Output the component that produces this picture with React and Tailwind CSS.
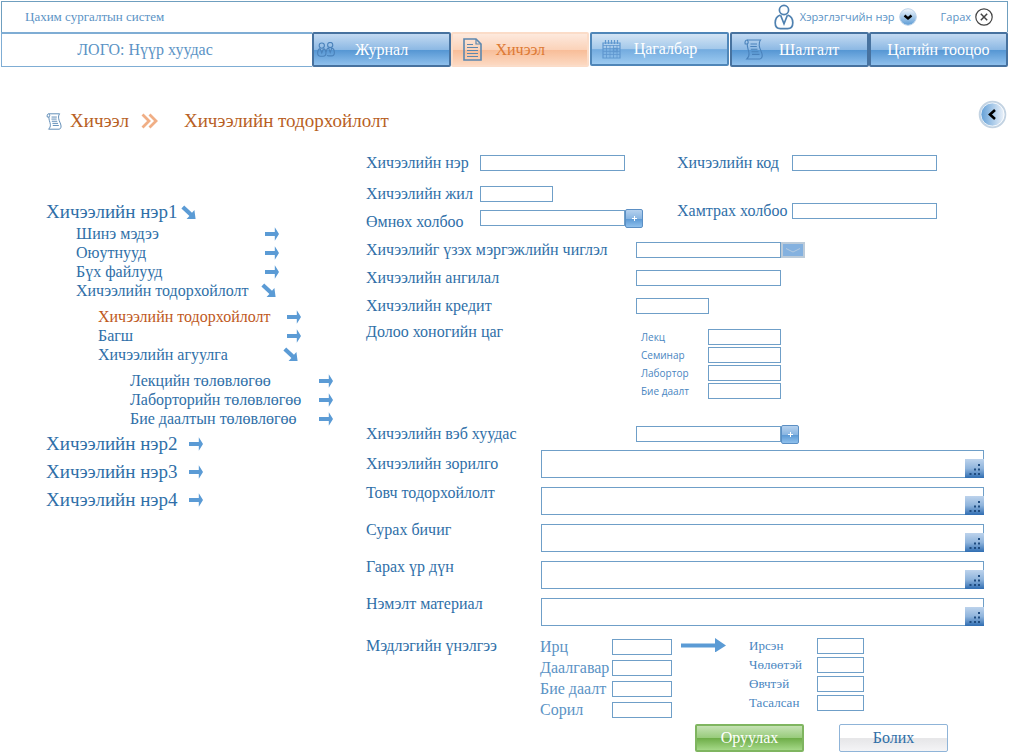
import React from "react";

const SERIF = "font-['Liberation_Serif','Times_New_Roman',serif]";
const SANS = "font-['Open_Sans','Noto_Sans',sans-serif]";
const BOX = "h-4 border border-[#6f9fc8] bg-white px-1 text-xs text-[#2f6fa8] outline-none";

function UserIcon({ className }) {
  return (
    <svg viewBox="0 0 20 26" className={className} fill="none" stroke="#4f81b0" strokeWidth="1.7">
      <circle cx="10" cy="6" r="4.600" />
      <path d="M6.500 11C3.200 12 1.200 15 1.200 18.800c0 3.700 2 5.900 5.200 5.900h7.200c3.200 0 5.200-2.200 5.200-5.900 0-3.800-2-6.800-5.300-7.800" />
      <path d="M6.600 11.200L10 19.800l3.400-8.600" />
    </svg>
  );
}

function UsersIcon({ className }) {
  return (
    <svg viewBox="0 0 18 15" className={className} fill="none" stroke="#4a82bb" strokeWidth="1.1">
      <circle cx="4.800" cy="3.600" r="2.600" />
      <path d="M3 6.400C1.500 7 .6 8.800.6 10.800c0 2.200 1.200 3.500 3 3.500h2.400c1.800 0 3-1.300 3-3.500 0-2-.9-3.800-2.400-4.400M3.200 6.600l1.600 4.400 1.600-4.400" />
      <circle cx="13.200" cy="3" r="2.600" />
      <path d="M11.400 5.800c-1.300.8-2 2.400-2.200 4M10 13.400c.5.300 1.200.5 2 .5h2.400c1.800 0 3-1.300 3-3.500 0-2-.9-3.800-2.400-4.400M11.600 6l1.600 4.400L14.800 6" />
    </svg>
  );
}

function PageIcon({ className }) {
  return (
    <svg viewBox="0 0 19 23" className={className} fill="none" stroke="#5c87ae">
      <path d="M1 1h12l5 5v16H1z" strokeWidth="1.600" />
      <path d="M13 1v5h5" strokeWidth="1.200" />
      <path d="M4 6.500h6M4 9.500h11M4 12.500h11M4 15.500h11M4 18.500h11" strokeWidth="1.100" />
    </svg>
  );
}

function CalendarIcon({ className }) {
  return (
    <svg viewBox="0 0 19 19" className={className} fill="none" stroke="#5f97cf">
      <path d="M1 3h17v15H1z" strokeWidth="1.200" />
      <path d="M1 5.500h17M1 8.500h17M1 11.500h17M1 14.500h17M4.500 5v13M8 5v13M11.500 5v13M15 5v13" strokeWidth=".8" />
      <path d="M3.500 0v4M6.500 0v4M9.500 0v4M12.500 0v4M15.500 0v4" strokeWidth="1.200" />
      <path d="M11.500 8.500H15v3h-3.500z" strokeWidth="1.400" />
    </svg>
  );
}

function ScrollIcon({ className }) {
  return (
    <svg viewBox="0 0 19 21" className={className} fill="none" stroke="currentColor" strokeWidth="1.100">
      <path d="M3 1h13.500c-1.400 1.600-1.500 3.500-1.300 5.500.4 3.800 2.700 6 3 9.500.1 2.200-.8 4-2.500 4H2.800c1.700-1.600 2.500-3.600 2.200-6C4.500 10.500 2.900 8.300 3.300 5H1.200C.6 3 1.400 1 3 1z" />
      <path d="M3.300 5C4.600 4 4.500 2 3 1M6.500 5h6.500M6.300 7.500h6.500M6.800 10.200h6.700M7.500 12.800h7M8 15.400h7.500" />
    </svg>
  );
}

function TreeArrow({ open }) {
  return open ? (
    <svg viewBox="0 0 15 15" className="mr-1 h-[15px] w-[15px] shrink-0" fill="#5b9bd5">
      <path d="M3.200.4L11 7.800l2.400-2.700 1.200 9-9-.2 2.800-2.800L.4 3.600z" />
    </svg>
  ) : (
    <svg viewBox="0 0 14 14" className="mr-px h-3.5 w-3.5 shrink-0" fill="#5b9bd5">
      <path d="M0 5h9.800V.3L14 7l-4.200 6.700V9H0z" />
    </svg>
  );
}

const TABS = [
  { label: "Журнал", icon: <UsersIcon className="absolute left-[3px] h-[15px] w-[18px]" />, look: "blue" },
  { label: "Хичээл", icon: <PageIcon className="absolute left-2.5 h-[23px] w-[19px]" />, look: "orange" },
  { label: "Цагалбар", icon: <CalendarIcon className="absolute left-2.5 h-[19px] w-[19px]" />, look: "light", pad: "pl-3" },
  { label: "Шалгалт", icon: <ScrollIcon className="absolute left-3 h-[21px] w-[19px] text-[#4a82bb]" />, look: "blue", pad: "pl-5" },
  { label: "Цагийн тооцоо", icon: null, look: "blue" },
];

const TAB_LOOKS = {
  blue: "border-2 border-[#47729f] bg-[linear-gradient(#c3daf2,#8db9e4_50%,#5596d3_52%,#8fc0ec)] text-white",
  light: "border-2 border-[#4f86b8] bg-[linear-gradient(#d3e4f4,#a3c8ea_50%,#73abdf_52%,#9ccaf0)] text-white mb-px mr-px",
  orange: "border-2 border-[#fbdcc8] bg-[linear-gradient(#fde9dd,#fbd3ba_50%,#f8bd98_52%,#fcd9c2)] text-[#dd7a35] mr-px",
};

const TREE = [
  {
    label: "Хичээлийн нэр1",
    children: [
      { label: "Шинэ мэдээ" },
      { label: "Оюутнууд" },
      { label: "Бүх файлууд" },
      {
        label: "Хичээлийн тодорхойлолт",
        children: [
          { label: "Хичээлийн тодорхойлолт", current: true },
          { label: "Багш" },
          {
            label: "Хичээлийн агуулга",
            children: [
              { label: "Лекцийн төлөвлөгөө" },
              { label: "Лаборторийн төлөвлөгөө" },
              { label: "Бие даалтын төлөвлөгөө" },
            ],
          },
        ],
      },
    ],
  },
  { label: "Хичээлийн нэр2" },
  { label: "Хичээлийн нэр3" },
  { label: "Хичээлийн нэр4" },
];

const NESTING = ["", "pl-[30px]", "mt-[7px] pl-[22px]", "mt-[7px] pl-8"];

function TreeItem({ node, level }) {
  const open = Boolean(node.children);
  const row =
    level === 0
      ? `h-6 text-[19px] ${open ? "gap-1" : "gap-3"}`
      : "h-[19px] w-[204px] justify-between text-base";
  return (
    <li>
      <a
        href="#"
        aria-current={node.current ? "page" : undefined}
        className={`flex items-center whitespace-nowrap ${row} ${node.current ? "text-[#c0591c]" : ""}`}
      >
        {node.label}
        <TreeArrow open={open} />
      </a>
      {open && (
        <ul className={NESTING[level + 1]}>
          {node.children.map((child) => (
            <TreeItem key={child.label} node={child} level={level + 1} />
          ))}
        </ul>
      )}
    </li>
  );
}

function PlusButton({ label }) {
  return (
    <button
      type="button"
      aria-label={label}
      className="flex h-[19px] w-[18px] items-center justify-center rounded-xs border border-[#5b8fc4] bg-[linear-gradient(#b5d1ee,#8ab6e2_50%,#5a98d4_52%,#8fc0ec)] text-white"
    >
      <svg viewBox="0 0 7 7" className="h-[7px] w-[7px]" stroke="currentColor">
        <path d="M3.500 1v5M1 3.500h5" />
      </svg>
    </button>
  );
}

function WideField({ id, label, center }) {
  return (
    <div className="flex h-7">
      <label htmlFor={id} className={`w-[175px] shrink-0 leading-3 ${center ? "self-center" : ""}`}>
        {label}
      </label>
      <div className="relative flex min-w-0 flex-1">
        <textarea
          id={id}
          className="h-7 w-full resize-none border border-[#6f9fc8] bg-white px-1 text-sm outline-none"
        />
        <svg viewBox="0 0 19 19" className="absolute right-0 bottom-0 h-[19px] w-[19px]" aria-hidden="true">
          <defs>
            <linearGradient id={`${id}-grip`} x1="0" y1="0" x2="0" y2="1">
              <stop offset="0" stopColor="#bdd3ec" />
              <stop offset=".5" stopColor="#8fb4dc" />
              <stop offset="1" stopColor="#2f6db2" />
            </linearGradient>
          </defs>
          <path d="M0 0h19v19H0z" fill={`url(#${id}-grip)`} />
          <path
            d="M13 5h2v2h-2zM9 9.500h2v2H9zM13 9.500h2v2h-2zM4.500 14h2v2h-2zM9 14h2v2H9zM13 14h2v2h-2z"
            fill="#1f4c80"
          />
        </svg>
      </div>
    </div>
  );
}

const HOURS = ["Лекц", "Семинар", "Лабортор", "Бие даалт"];
const WIDE = ["Хичээлийн зорилго", "Товч тодорхойлолт", "Сурах бичиг", "Гарах үр дүн", "Нэмэлт материал"];
const GRADES = ["Ирц", "Даалгавар", "Бие даалт", "Сорил"];
const ATTENDANCE = ["Ирсэн", "Чөлөөтэй", "Өвчтэй", "Тасалсан"];

export default function App() {
  return (
    <div className={`bg-white ${SERIF} text-[#2f6fa8]`}>
      <header className="px-px pt-px text-[#5b93c5]">
        <div className="flex h-[31px] items-center justify-between border border-b-0 border-[#6f9fbf] pr-3.5 pl-[23px]">
          <span className="text-[13px]">Цахим сургалтын систем</span>
          <div className={`flex items-center text-[11px] ${SANS}`}>
            <UserIcon className="h-[26px] w-5" />
            <button type="button" className="ml-1.5 flex items-center gap-1">
              Хэрэглэгчийн нэр
              <svg viewBox="0 0 18 18" className="h-[18px] w-[18px]">
                <defs>
                  <linearGradient id="menu-dot" x1="0" y1="0" x2="0" y2="1">
                    <stop offset="0" stopColor="#f4f8fd" />
                    <stop offset="1" stopColor="#5b9bd5" />
                  </linearGradient>
                </defs>
                <circle cx="9" cy="9" r="8.300" fill="url(#menu-dot)" stroke="#bcd3ea" />
                <path d="M5.500 7.500L9 10.500l3.500-3" fill="none" stroke="#000" strokeWidth="2.400" />
              </svg>
            </button>
            <button type="button" className="ml-6 flex items-center gap-1">
              Гарах
              <svg viewBox="0 0 18 18" className="h-[18px] w-[18px]" fill="none" stroke="#444">
                <circle cx="9" cy="9" r="8.200" strokeWidth="1.200" />
                <path d="M5.800 5.800l6.400 6.400M12.200 5.800l-6.400 6.400" strokeWidth="1.500" />
              </svg>
            </button>
          </div>
        </div>
        <nav className="grid h-[35px] grid-cols-[311px_repeat(5,minmax(0,1fr))]">
          <a
            href="#"
            className="flex items-center justify-center border border-t-2 border-r-0 border-[#7fadd4] pr-6 text-base"
          >
            ЛОГО: Нүүр хуудас
          </a>
          {TABS.map((tab) => (
            <a
              key={tab.label}
              href="#"
              className={`relative flex items-center justify-center rounded-xs text-base whitespace-nowrap ${TAB_LOOKS[tab.look]} ${tab.pad ?? ""}`}
            >
              {tab.icon}
              {tab.label}
            </a>
          ))}
        </nav>
      </header>

      <div className="mt-[33px] flex h-[33px] justify-between pr-0.5 pl-[46px]">
        <h1 className="flex items-center gap-3 self-end text-[19px] leading-6 text-[#b85f24]">
          <span className="flex items-center gap-2">
            <ScrollIcon className="h-[17px] w-4 text-[#4f81b0]" />
            Хичээл
          </span>
          <svg viewBox="0 0 17 16" className="mr-3.5 h-4 w-[17px]" fill="none" stroke="#f0ae85" strokeWidth="2.800">
            <path d="M1.500 1.500L8 8l-6.500 6.500M8.500 1.500L15 8l-6.500 6.500" />
          </svg>
          <span>Хичээлийн тодорхойлолт</span>
        </h1>
        <button type="button" aria-label="Буцах" className="h-[29px] w-[29px]">
          <svg viewBox="0 0 29 29" className="h-[29px] w-[29px]">
            <defs>
              <linearGradient id="back-dot">
                <stop offset="0" stopColor="#5b9bd5" />
                <stop offset="1" stopColor="#f4f7fc" />
              </linearGradient>
            </defs>
            <circle cx="14.500" cy="14.500" r="12.800" fill="url(#back-dot)" stroke="#c3d3e2" strokeWidth="2" />
            <circle cx="14.500" cy="14.500" r="11.600" fill="none" stroke="#fff" strokeWidth=".8" />
            <path d="M17 10l-5 4.500 5 4.500" fill="none" stroke="#000" strokeWidth="2.600" />
          </svg>
        </button>
      </div>

      <main className="flex">
        <aside className="w-[366px] shrink-0 pt-[67px] pl-[46px]">
          <ul className="flex flex-col gap-1">
            {TREE.map((node) => (
              <TreeItem key={node.label} node={node} level={0} />
            ))}
          </ul>
        </aside>

        <form className="min-w-0 flex-1 pt-[18px] pr-[25px] text-base">
          <div className="flex">
            <div className="w-[311px]">
              <div className="flex h-6 items-center">
                <label htmlFor="name" className="w-[114px]">Хичээлийн нэр</label>
                <input id="name" className={`${BOX} w-[145px]`} />
              </div>
              <div className="mt-[7px] flex h-6 items-center">
                <label htmlFor="year" className="w-[114px]">Хичээлийн жил</label>
                <input id="year" className={`${BOX} w-[73px]`} />
              </div>
              <div className="flex h-[30px] items-start">
                <label htmlFor="prev" className="w-[114px] pt-1">Өмнөх холбоо</label>
                <div className="flex h-6 items-center">
                  <input id="prev" className={`${BOX} w-[145px]`} />
                  <PlusButton label="Өмнөх холбоо нэмэх" />
                </div>
              </div>
            </div>
            <div className="flex flex-col gap-6">
              <div className="flex h-6 items-center">
                <label htmlFor="code" className="w-[115px]">Хичээлийн код</label>
                <input id="code" className={`${BOX} w-[145px]`} />
              </div>
              <div className="flex h-6 items-center">
                <label htmlFor="joint" className="w-[115px] whitespace-nowrap">Хамтрах холбоо</label>
                <input id="joint" className={`${BOX} w-[145px]`} />
              </div>
            </div>
          </div>

          <div className="flex h-7 items-center">
            <label htmlFor="major" className="w-[270px]">Хичээлийг үзэх мэргэжлийн чиглэл</label>
            <input id="major" className={`${BOX} w-[145px]`} />
            <button
              type="button"
              aria-label="Чиглэл сонгох"
              className="flex h-4 w-6 items-center justify-center border-2 border-[#bccbd9] bg-[#84b1df]"
            >
              <svg viewBox="0 0 14 5" className="h-[5px] w-3.5" fill="none" stroke="#b3c9df">
                <path d="M0 .5l3 1.500 4 2 4-2 3-1.500" />
              </svg>
            </button>
          </div>
          <div className="flex h-7 items-center">
            <label htmlFor="category" className="w-[270px]">Хичээлийн ангилал</label>
            <input id="category" className={`${BOX} w-[145px]`} />
          </div>
          <div className="flex h-7 items-center">
            <label htmlFor="credit" className="w-[270px]">Хичээлийн кредит</label>
            <input id="credit" className={`${BOX} w-[73px]`} />
          </div>
          <fieldset className="flex">
            <legend className="float-left w-[275px]">Долоо хоногийн цаг</legend>
            <div className={`pt-2 text-[10px] text-[#4a86bf] ${SANS}`}>
              {HOURS.map((label, i) => (
                <div key={label} className="flex h-[18px] items-center">
                  <label htmlFor={`hours-${i}`} className="w-[67px]">{label}</label>
                  <input id={`hours-${i}`} className={`${BOX} w-[73px]`} />
                </div>
              ))}
            </div>
          </fieldset>
          <div className="mt-5 flex h-7 items-center">
            <label htmlFor="web" className="w-[270px]">Хичээлийн вэб хуудас</label>
            <input id="web" className={`${BOX} w-[145px]`} />
            <PlusButton label="Вэб хуудас нэмэх" />
          </div>

          <div className="mt-0.5 flex flex-col gap-[9px]">
            {WIDE.map((label, i) => (
              <WideField key={label} id={`wide-${i}`} label={label} center={i === 0} />
            ))}
          </div>

          <div className="mt-2.5 flex items-start">
            <span className="w-[174px] leading-5">Мэдлэгийн үнэлгээ</span>
            <div className="text-[#5b93c5]">
              {GRADES.map((label, i) => (
                <div key={label} className="flex h-[21px] items-center">
                  <label htmlFor={`grade-${i}`} className="w-[72px] whitespace-nowrap">{label}</label>
                  <input id={`grade-${i}`} className={`${BOX} w-[60px]`} />
                </div>
              ))}
            </div>
            <svg viewBox="0 0 45 16" className="mr-[23px] ml-[9px] h-4 w-[45px] self-start" fill="#5b9bd5">
              <path d="M0 7.500h34V2l11 7.500L34 16.500v-5H0z" />
            </svg>
            <div className="text-[13px] text-[#4a86bf]">
              {ATTENDANCE.map((label, i) => (
                <div key={label} className="flex h-[19px] items-center">
                  <label htmlFor={`att-${i}`} className="w-[68px]">{label}</label>
                  <input id={`att-${i}`} className={`${BOX} w-[47px]`} />
                </div>
              ))}
            </div>
          </div>

          <div className="mt-1 flex justify-end gap-[35px] pr-9">
            <button
              type="submit"
              className="h-7 w-[109px] rounded-xs border-2 border-[#7fb560] bg-[linear-gradient(#c5e2b4,#98cb7b_50%,#6fae49_52%,#a5d888)] text-base leading-6 text-white"
            >
              Оруулах
            </button>
            <button
              type="button"
              className="h-7 w-[109px] rounded-xs border border-[#8fb4d8] bg-[linear-gradient(#fff_50%,#e6e6e8_52%,#f4f4f6)] text-base leading-6"
            >
              Болих
            </button>
          </div>
        </form>
      </main>
    </div>
  );
}
